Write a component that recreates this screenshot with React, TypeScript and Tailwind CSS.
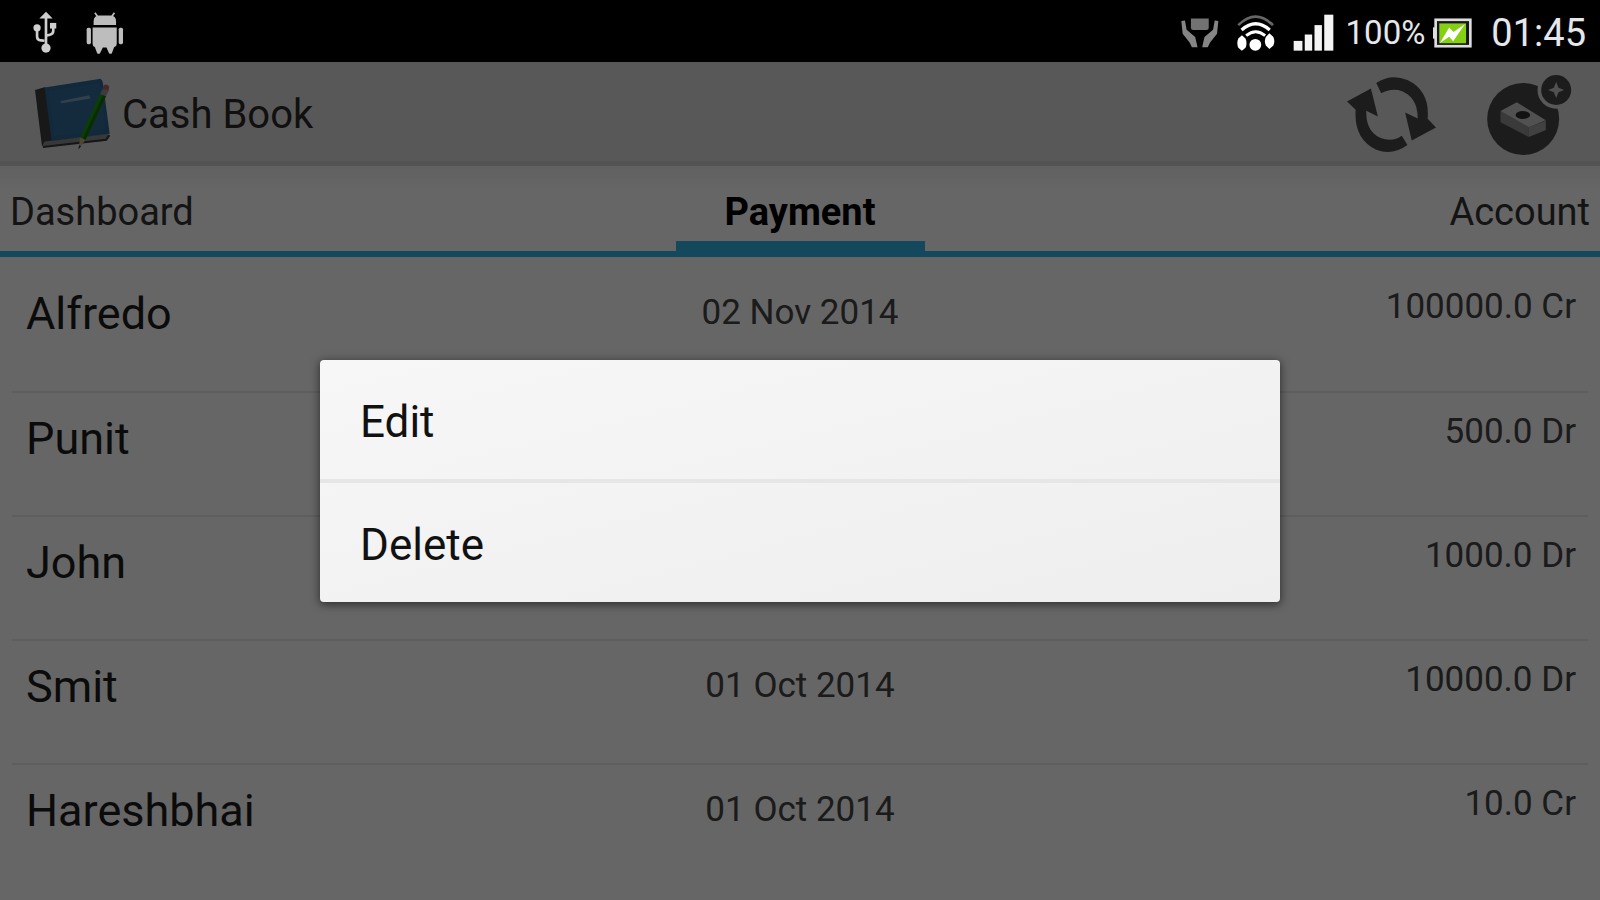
import { useState } from 'react';

interface Payment {
  name: string;
  date: string;
  amount: string;
}

const payments: Payment[] = [
  { name: 'Alfredo', date: '02 Nov 2014', amount: '100000.0 Cr' },
  { name: 'Punit', date: '01 Nov 2014', amount: '500.0 Dr' },
  { name: 'John', date: '01 Nov 2014', amount: '1000.0 Dr' },
  { name: 'Smit', date: '01 Oct 2014', amount: '10000.0 Dr' },
  { name: 'Hareshbhai', date: '01 Oct 2014', amount: '10.0 Cr' },
];

const tabs = [
  { label: 'Dashboard', align: 'text-left pl-[10px]' },
  { label: 'Payment', align: 'text-center' },
  { label: 'Account', align: 'text-right pr-[10px]' },
];

function UsbIcon() {
  return (
    <svg viewBox="100 30 75 130" className="h-[43px] w-[25px]" fill="none" stroke="#cfcfcf" strokeWidth="8">
      <path d="M139 48v92M112 84v22q0 12 12 13l10 1M161 76v14q0 10-10 12l-12 3" />
      <g fill="#cfcfcf" stroke="none">
        <path d="M139 32l20 21h-40z" />
        <circle cx="139" cy="142" r="14" />
        <circle cx="112" cy="81" r="11" />
        <rect x="151" y="66" width="19" height="17" />
      </g>
    </svg>
  );
}

function AndroidIcon() {
  return (
    <svg viewBox="260 36 115 126" className="h-[42px] w-[38px]" fill="#bdbdbd">
      <path d="M287 38l10 14M346 38l-10 14" stroke="#bdbdbd" strokeWidth="5" />
      <path d="M283 75V64q0-18 18-18h32q18 0 18 18v11z" />
      <path d="M280 82h73v50q0 8-8 10l-7 19q-4 2-8 0l-8-18h-11l-9 18q-4 2-8 0l-7-19q-7-3-7-10z" />
      <rect x="262" y="83" width="13" height="50" rx="5" />
      <rect x="359" y="83" width="13" height="50" rx="5" />
    </svg>
  );
}

function PowerSaverIcon() {
  return (
    <svg viewBox="55 48 115 96" className="h-[32px] w-[38px]">
      <path d="M85 52h54v28q0 7-7 7H92q-7 0-7-7z" fill="#727272" />
      <path
        d="M56 60l11-2 5 28 26 22 7 31H88l-7-14-21-27zM168 60l-11-2-5 28-26 22-7 31h17l7-14 21-27z"
        fill="#858585"
      />
    </svg>
  );
}

function HotspotIcon() {
  return (
    <svg viewBox="220 38 120 116" className="h-[38px] w-[40px]" fill="none">
      <path d="M226 72q53-52 106 0" stroke="#666" strokeWidth="8" />
      <path d="M236 87q43-38 86 0" stroke="#fff" strokeWidth="10" />
      <path d="M250 104q29-24 58 0" stroke="#fff" strokeWidth="9" />
      <g fill="#fff">
        <circle cx="278" cy="132" r="18" />
        <path d="M237 103l11 10q6 14 0 28l-11 9-11-9q-6-14 0-28zM321 97l12 11q6 14 0 26l-12 11-11-11q-6-12 0-26z" />
      </g>
    </svg>
  );
}

function SignalIcon() {
  return (
    <svg viewBox="394 42 122 110" className="h-[37px] w-[41px]" fill="#f4f4f4">
      <rect x="396" y="122" width="26" height="29" />
      <rect x="429" y="103" width="22" height="48" />
      <rect x="458" y="75" width="22" height="76" />
      <rect x="487" y="44" width="27" height="107" />
    </svg>
  );
}

function BatteryIcon() {
  return (
    <svg viewBox="822 54 118 90" className="h-[30px] w-[39px]">
      <rect x="830" y="59" width="105" height="80" fill="#181818" stroke="#dedede" strokeWidth="8" />
      <rect x="822" y="82" width="9" height="34" fill="#dedede" />
      <path d="M841 70h81v60h-81z" fill="#86d013" />
      <path d="M843 129l28-47 13 14 35-24-36 52-12-14z" fill="#fff" />
    </svg>
  );
}

function BookIcon() {
  return (
    <svg viewBox="98 236 238 218" className="h-[73px] w-[79px]">
      <path d="M104 271l31-9 24 165-34 14z" fill="#3c3c3c" />
      <path d="M125 441l8-15 190-24 6 9-9 13z" fill="#8c8c8c" />
      <path d="M128 443l190-22 10-14" fill="none" stroke="#34373c" strokeWidth="6" />
      <path d="M133 264l169-27q6 5 7 15l20 151-175 22z" fill="#2f6594" />
      <path d="M145 276l155-26 16 140-155 20z" fill="#346b9a" />
      <path d="M180 305l88-18 3 10-87 14z" fill="#7da1bd" />
      <path d="M300 283l18 7-62 132-16-8z" fill="#1c9a0c" />
      <path d="M309 287l9 3-62 132-8-4z" fill="#137006" />
      <path d="M240 414l16 8-21 28z" fill="#c3ad82" />
      <path d="M237 438l6 3-8 9z" fill="#333" />
      <path d="M300 283l7-15 18 7-7 15z" fill="#93979b" />
      <path d="M307 268l5-12q9-4 16 5l-3 14z" fill="#b4636d" />
    </svg>
  );
}

function RefreshIcon() {
  return (
    <svg viewBox="76 46 272 232" className="h-[77px] w-[91px]" fill="#484848">
      <path d="M166 67Q210 38 260 58Q328 90 321 175L346 201L273 240L253 156L291 174Q291 104 232 88Q205 84 181 98Z" />
      <path d="M260 254Q215 287 166 268Q98 236 104 148L78 123L150 84L171 168L136 151Q134 220 190 236Q220 243 243 226Z" />
    </svg>
  );
}

function AddCashIcon() {
  return (
    <svg viewBox="504 36 254 246" className="h-[82px] w-[85px]">
      <circle cx="612" cy="171" r="108" fill="#464646" />
      <circle cx="711" cy="84" r="56" fill="#dcdcdc" />
      <circle cx="711" cy="84" r="45" fill="#464646" />
      <path d="M711 60l7 17 17 7-17 7-7 17-7-17-17-7 17-7z" fill="#cacaca" />
      <path d="M544 147l85 49v29l-85-44z" fill="#929292" />
      <path d="M629 196l51-20v28l-51 21z" fill="#a4a4a4" />
      <path d="M544 147l49-26 87 54-51 21z" fill="#cacaca" />
      <ellipse cx="611" cy="159" rx="22" ry="12" fill="#2f2f2f" />
    </svg>
  );
}

function StatusBar() {
  return (
    <div className="flex h-[62px] items-center justify-between bg-black pl-[33px] pr-[14px] pt-[3px] text-gray-200">
      <div className="flex items-center gap-[28px]">
        <UsbIcon />
        <AndroidIcon />
      </div>
      <div className="flex items-center">
        <div className="flex items-center gap-[17px]">
          <PowerSaverIcon />
          <HotspotIcon />
          <SignalIcon />
        </div>
        <span className="ml-3 text-[33px] leading-10">100%</span>
        <span className="ml-2">
          <BatteryIcon />
        </span>
        <span className="ml-[19px] text-[38px] leading-10">01:45</span>
      </div>
    </div>
  );
}

function ActionBar() {
  return (
    <header className="flex h-[104px] items-center border-b-[5px] border-[#cfcfcf] bg-[#dcdcdc] pl-[33px] pr-[28px] pt-[6px]">
      <BookIcon />
      <h1 className="ml-[10px] flex-1 text-[40px] leading-[48px] text-[#2a2a2a]">Cash Book</h1>
      <div className="flex items-center gap-[50px]">
        <button type="button" aria-label="Refresh">
          <RefreshIcon />
        </button>
        <button type="button" aria-label="Add payment">
          <AddCashIcon />
        </button>
      </div>
    </header>
  );
}

export default function App() {
  const [activeTab, setActiveTab] = useState('Payment');
  const [menuOpen, setMenuOpen] = useState(true);

  return (
    <div className="flex min-h-screen flex-col bg-white font-['Roboto',sans-serif]">
      <StatusBar />

      <div className="relative flex-1">
        <ActionBar />

        <nav className="grid grid-cols-[1fr_249px_1fr] border-b-[6px] border-[#33b5e5] bg-linear-to-b from-[#f2f2f2] to-white to-30%">
          {tabs.map((tab) => (
            <button
              key={tab.label}
              type="button"
              onClick={() => setActiveTab(tab.label)}
              className={`h-[85px] border-b-[10px] pt-4 text-[38px] leading-[48px] ${tab.align} ${
                activeTab === tab.label
                  ? 'border-[#33b5e5] font-bold text-black'
                  : 'border-transparent text-[#333]'
              }`}
            >
              {tab.label}
            </button>
          ))}
        </nav>

        <div className="px-3 pt-[11px]">
          <table className="w-full table-fixed">
            <tbody>
              {payments.map((payment) => (
                <tr
                  key={payment.name}
                  onClick={() => setMenuOpen(true)}
                  className="h-[124px] border-b-2 border-[#ebebeb] align-top last:border-b-0"
                >
                  <td className="pl-[14px] pt-[18px] text-[45px] leading-[56px] text-[#1c1c1c]">{payment.name}</td>
                  <td className="pt-[25px] text-center text-[35px] leading-10 text-[#444]">{payment.date}</td>
                  <td className="pr-3 pt-[19px] text-right text-[35px] leading-10 text-[#444]">{payment.amount}</td>
                </tr>
              ))}
            </tbody>
          </table>
        </div>

        {/* Context menu for the selected payment */}
        {menuOpen && (
          <div className="absolute inset-0 flex items-center justify-center bg-black/60">
            <div
              role="dialog"
              aria-label="Payment actions"
              className="w-3/5 divide-y-4 divide-[#e6e6e6] rounded-sm bg-linear-to-br from-[#f7f7f7] to-[#eeeeee] shadow-[0_2px_8px_1px_rgba(0,0,0,0.5)]"
            >
              {['Edit', 'Delete'].map((action) => (
                <button
                  key={action}
                  type="button"
                  onClick={() => setMenuOpen(false)}
                  className="block w-full px-10 pb-[29px] pt-[34px] text-left text-[44px] leading-[56px] text-[#111]"
                >
                  {action}
                </button>
              ))}
            </div>
          </div>
        )}
      </div>
    </div>
  );
}
